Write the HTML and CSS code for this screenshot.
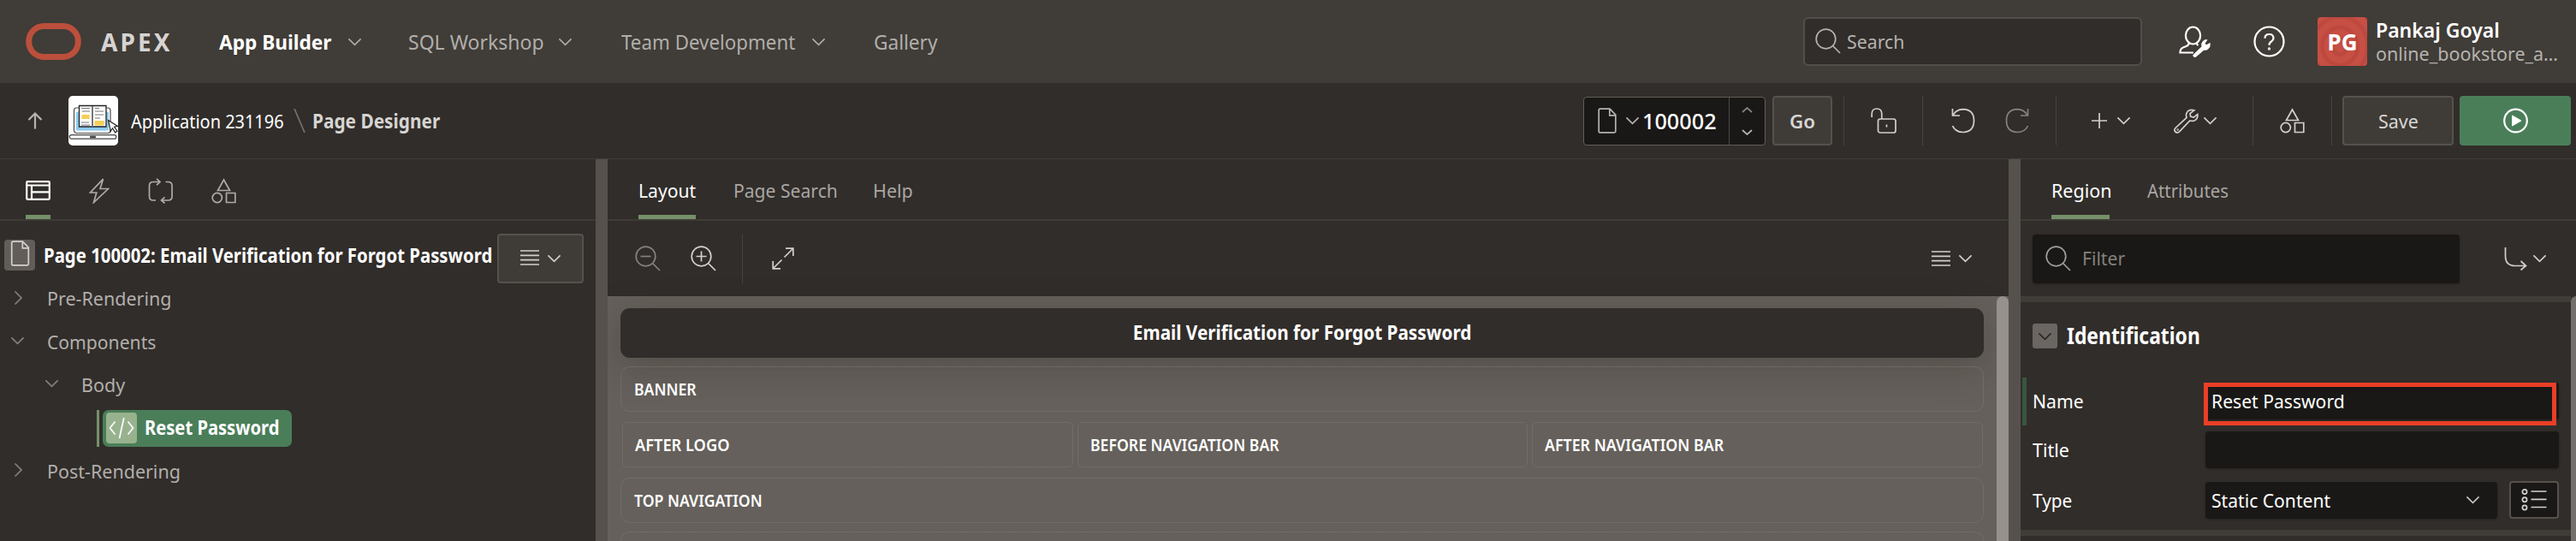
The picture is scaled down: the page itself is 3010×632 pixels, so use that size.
FILE: index.html
```html
<!DOCTYPE html>
<html lang="en">
<head>
<meta charset="utf-8">
<title>Page Designer</title>
<link rel="stylesheet" href="styles.css">
</head>
<body>
<svg width="0" height="0" class="defs">
  <symbol id="down" viewBox="0 0 18 10"><path d="M1.5 1.2 9 8.6l7.500-7.400"/></symbol>
  <symbol id="right" viewBox="0 0 11 18"><path d="M1.500 1.500 9 9l-7.500 7.500"/></symbol>
  <symbol id="lens" viewBox="0 0 30 30"><circle cx="12.500" cy="12.500" r="11.300"/><path d="M20.500 20.500 29 29"/></symbol>
  <symbol id="page" viewBox="0 0 22 30"><path d="M2.500 1.200h11.500l6.800 7v19q0 1.600-1.600 1.600H2.500q-1.300 0-1.300-1.600V2.500q0-1.300 1.300-1.300zM13.800 1.500v7.300h7"/></symbol>
  <symbol id="shapes" viewBox="0 0 29 30"><path d="M14.500 2 21.500 14.500h-14zM17.500 17.500h10.300v11H17.500z"/><circle cx="6.800" cy="23" r="5.600"/></symbol>
  <symbol id="lines" viewBox="0 0 22 20"><path d="M0 2h22M0 7.300h22M0 12.700h22M0 18h22"/></symbol>
</svg>

<header class="header">
  <div class="brand-nav">
    <svg class="logo" width="65" height="43" viewBox="0 0 65 43"><rect x="3.750" y="3.500" width="57.500" height="36" rx="17.500"/></svg>
    <span class="brand">APEX</span>
    <span class="nav active k94">App Builder</span><svg class="ic mute" width="17" height="10"><use href="#down"/></svg>
    <span class="nav k96">SQL Workshop</span><svg class="ic mute" width="17" height="10"><use href="#down"/></svg>
    <span class="nav k93">Team Development</span><svg class="ic mute" width="17" height="10"><use href="#down"/></svg>
    <span class="nav k94">Gallery</span>
  </div>
  <div class="account">
    <div class="search">
      <svg class="ic" width="30" height="30"><use href="#lens"/></svg>
      <span class="k95">Search</span>
    </div>
    <svg class="ic white bold user" width="37" height="37" viewBox="0 0 37 37"><ellipse cx="16.500" cy="11.500" rx="8.600" ry="10"/><path d="M12 20q-.5 3-4 4.200Q1.500 26 1.500 30.500V31.500H17M20.500 20q.3 2 2 3"/><path class="solid" d="M17.500 33.500 27 24.500q-1.300-5.200 3-7.500l2.800-.4-2.600 4.100 1.600 2.200 4.400-2.300q.6 5-2.700 7-2 1-4.300.6l-9.400 8q-1.600.9-2.600-.3t.3-2.400z"/></svg>
    <svg class="ic white bold help" width="37" height="37" viewBox="0 0 37 37"><circle cx="18.500" cy="18.500" r="17"/><path d="M13.500 14.800q0-4.800 5-4.800t5 4.500q0 2.400-2.500 4-2.500 1.500-2.500 4.200"/><circle cx="18.500" cy="27" r=".6"/></svg>
    <div class="avatar"><span>PG</span></div>
    <div class="who"><span class="user-name k96">Pankaj Goyal</span><span class="space k96">online_bookstore_a…</span></div>
  </div>
</header>

<div class="toolbar">
  <svg class="ic bold up" width="18" height="20" viewBox="0 0 18 20"><path d="M9 19.500V2M1.500 9 9 1.500 16.500 9"/></svg>
  <svg class="appicon" width="58" height="58" viewBox="0 0 58 58">
    <rect width="58" height="58" rx="5" fill="#fff"/>
    <rect x="6.500" y="14" width="42.500" height="29.500" rx="3" fill="#fff" stroke="#4a4a4a" stroke-width="1.200"/>
    <rect x="9" y="18.500" width="38" height="22" rx="1.500" fill="#8ccbf0"/>
    <path d="M12.500 11.500H28V36H12.500zM28 11.500h16V36H28z" fill="#fff" stroke="#222" stroke-width="1.300"/>
    <path d="M28 12v24" stroke="#777" stroke-width="2"/>
    <path d="M15.500 22h9v5h-9zM30.500 29h11v5.500h-11z" fill="#f5ce55"/>
    <path d="M15 14.500h10M16 18h9M15 31h9M15 34h10M31 14.500h5M31 18h10M31 22h10M31 26h6" stroke="#777" stroke-width="1"/>
    <rect x="1.300" y="45.600" width="54.500" height="4.500" rx="2.200" fill="#fff" stroke="#444" stroke-width="1.200"/>
    <rect x="25" y="46.700" width="7" height="2.600" rx="1" fill="#444"/>
    <path d="m46.500 28.500 11 7-4 .7 3.500 4.800-2.500 1.800-3-5-2.200 3.500z" fill="#fff" stroke="#222" stroke-width="1.200"/>
  </svg>
  <span class="crumb k89">Application 231196</span>
  <svg class="ic slash" width="14" height="28" viewBox="0 0 14 28"><path d="M1 0l12 28"/></svg>
  <span class="crumb last k93">Page Designer</span>

  <div class="tools">
    <div class="pagesel">
      <svg class="ic lt" width="22" height="30"><use href="#page"/></svg>
      <svg class="ic lt" width="17" height="10"><use href="#down"/></svg>
      <span class="k97">100002</span>
      <div class="spin"><svg class="ic dim" width="13" height="7" viewBox="0 0 13 7"><path d="M1 6l5.500-5L12 6"/></svg><svg class="ic lt" width="13" height="7" viewBox="0 0 13 7"><path d="M1 1l5.500 5L12 1"/></svg></div>
    </div>
    <div class="btn go">Go</div>
    <i class="rule r1"></i>
    <svg class="ic lock" width="30" height="30" viewBox="0 0 30 30"><rect x="8.500" y="13" width="20.500" height="16" rx="2.500"/><path d="M1.200 11V7q0-6 5.800-6t5.800 6v6M18.500 19.500v3"/></svg>
    <i class="rule r2"></i>
    <svg class="ic undo" width="28" height="30" viewBox="0 0 28 30"><path d="M1.500 1v8H10M2 9Q5.500 1.700 14 1.700q12.500.5 12.500 13.300T14 28.500Q5 28.500 1.500 21"/></svg>
    <svg class="ic dim redo" width="28" height="30" viewBox="0 0 28 30"><path d="M26.500 1v8H18M26 9Q22.500 1.700 14 1.700 1.500 2.200 1.500 15T14 28.500q9 0 12.500-7.500"/></svg>
    <i class="rule r3"></i>
    <svg class="ic plus" width="18" height="18" viewBox="0 0 18 18"><path d="M9 0v18M0 9h18"/></svg>
    <svg class="ic c1" width="17" height="10"><use href="#down"/></svg>
    <svg class="ic wrench" width="29" height="29" viewBox="0 0 29 29"><path d="M23.800 1.800Q17.300.2 15 5.200q-1 2 0 5.200L2 22.500q-2.200 2.500 0 4.500t4.500-.2L18.800 14q3.400 1 5.700-.2 4-2.400 3.300-7.300l-4.600 3.600-3.600-1-.6-3.600z"/><circle cx="4.600" cy="24.400" r=".4"/></svg>
    <svg class="ic c2" width="17" height="10"><use href="#down"/></svg>
    <i class="rule r4"></i>
    <svg class="ic shp" width="29" height="30"><use href="#shapes"/></svg>
    <i class="rule r5"></i>
    <div class="btn save"><span class="k96">Save</span></div>
    <div class="btn run"><svg class="ic white bold" width="29" height="30" viewBox="0 0 29 30"><circle cx="14.500" cy="15" r="13.300"/><path class="solid" d="M10.500 9v12l10.500-6z"/></svg></div>
  </div>
</div>

<main class="panes">
  <section class="tree-pane">
    <div class="tabs icons">
      <div class="tab on"><svg class="ic white bold" width="29" height="23" viewBox="0 0 29 23"><rect x="1.200" y="1.200" width="26.600" height="20.600" rx="1"/><path d="M1 5.500h27M7 5.500v16M7 13.300h21"/></svg></div>
      <div class="tab"><svg class="ic mute" width="24" height="30" viewBox="0 0 24 30"><path d="M16.500 1.200 1.500 17h7.300L5.500 28.500 22.500 12.500H13z"/></svg></div>
      <div class="tab"><svg class="ic mute" width="29" height="30" viewBox="0 0 29 30"><path d="M9 26H6q-4.500 0-4.500-4.500V9Q1.500 4.500 6 4.500h7.500M10 .8l4 3.700-4 3.700M20.500 4.500h3q4.500 0 4.500 4.500v12.500q0 4.500-4.500 4.500H16M19.500 22.300l-4 3.700 4 3.500"/></svg></div>
      <div class="tab"><svg class="ic mute" width="29" height="30"><use href="#shapes"/></svg></div>
    </div>
    <div class="tree-title">
      <span class="pageico"><svg class="ic" width="23" height="30"><use href="#page"/></svg></span>
      <span class="t strong k91">Page 100002: Email Verification for Forgot Password</span>
      <div class="btn menu"><svg class="ic" width="22" height="20"><use href="#lines"/></svg><svg class="ic" width="17" height="10"><use href="#down"/></svg></div>
    </div>
    <div class="node"><svg class="ic dim shut" width="11" height="18"><use href="#right"/></svg><span class="k96">Pre-Rendering</span></div>
    <div class="node"><svg class="ic dim" width="17" height="10"><use href="#down"/></svg><span class="k94">Components</span></div>
    <div class="node sub"><svg class="ic dim" width="17" height="10"><use href="#down"/></svg><span class="k96">Body</span></div>
    <div class="node leaf"><div class="pill"><span class="code"><svg class="ic white" width="30" height="26" viewBox="0 0 30 26"><path d="M7.500 5.500 1.500 13l6 7.500M22.500 5.500l6 7.500-6 7.500M17.800 1 12.500 25"/></svg></span><span class="k90">Reset Password</span></div></div>
    <div class="node"><svg class="ic dim shut" width="11" height="18"><use href="#right"/></svg><span class="k96">Post-Rendering</span></div>
  </section>

  <div class="splitter"></div>

  <section class="layout-pane">
    <div class="tabs">
      <div class="tab on w67"><span class="k94">Layout</span></div>
      <div class="tab w119"><span class="k94">Page Search</span></div>
      <div class="tab"><span class="k96">Help</span></div>
    </div>
    <div class="zoombar">
      <svg class="ic dim" width="30" height="30" viewBox="0 0 30 30"><use href="#lens"/><path d="M6.500 12.500h12"/></svg>
      <svg class="ic zin" width="30" height="30" viewBox="0 0 30 30"><use href="#lens"/><path d="M6.500 12.500h12M12.500 6.500v12"/></svg>
      <i class="rule"></i>
      <svg class="ic expand" width="26" height="26" viewBox="0 0 26 26"><path d="M14.500 11.500 24.500 1.500M16 1.200h8.800V10M11.500 14.500l-10 10M1.200 16v8.800H10"/></svg>
      <svg class="ic lns" width="22" height="20"><use href="#lines"/></svg>
      <svg class="ic" width="17" height="10"><use href="#down"/></svg>
    </div>
    <div class="canvas">
      <div class="slots">
        <div class="pagetitle"><span>Email Verification for Forgot Password</span></div>
        <div class="slot"><span class="k90">BANNER</span></div>
        <div class="trio">
          <div class="slot"><span class="k93">AFTER LOGO</span></div>
          <div class="slot"><span class="k90">BEFORE NAVIGATION BAR</span></div>
          <div class="slot"><span class="k91">AFTER NAVIGATION BAR</span></div>
        </div>
        <div class="slot"><span class="k90">TOP NAVIGATION</span></div>
        <div class="slot"></div>
      </div>
      <div class="thumb"></div>
    </div>
  </section>

  <div class="splitter"></div>

  <section class="props">
    <div class="tabs">
      <div class="tab on w68"><span class="k96">Region</span></div>
      <div class="tab"><span class="k91">Attributes</span></div>
    </div>
    <div class="filterbar">
      <div class="filter"><svg class="ic" width="30" height="30"><use href="#lens"/></svg><span class="k94">Filter</span></div>
      <svg class="ic goto" width="27" height="28" viewBox="0 0 27 28"><path d="M1.500 1v10q0 11.500 11.500 11.500h12M19.500 17l6 5.500-6 5"/></svg>
      <svg class="ic" width="17" height="10"><use href="#down"/></svg>
    </div>
    <div class="sheet">
      <div class="fields">
        <div class="group"><span class="toggle"><svg class="ic dark" width="17" height="10"><use href="#down"/></svg></span><span class="k88">Identification</span></div>
        <div class="field f-name"><i class="mark"></i><label class="k94">Name</label><div class="input"><span class="k94">Reset Password</span><div class="callout"></div></div></div>
        <div class="field f-title"><label class="k96">Title</label><div class="input"></div></div>
        <div class="field f-type"><label class="k93">Type</label><div class="input select"><span class="k94">Static Content</span><svg class="ic" width="17" height="10"><use href="#down"/></svg></div>
          <div class="picker"><svg class="ic" width="30" height="28" viewBox="0 0 30 28"><circle cx="4" cy="4.500" r="2.600"/><circle cx="4" cy="13.800" r="2.600"/><circle cx="4" cy="23" r="2.600"/><path d="M11.500 4h18M11.500 13.300h18M11.500 22.500h18"/></svg></div></div>
      </div>
      <div class="thumb"></div>
    </div>
  </section>
</main>
</body>
</html>
```
FILE: styles.css
```css
* { box-sizing: border-box; }
body {
  margin: 0;
  width: 3010px;
  height: 632px;
  overflow: hidden;
  background: #312d2a;
  color: #fff;
  font: 22.4px/30px "Noto Sans", "Open Sans", sans-serif;
  white-space: nowrap;
}
.defs { position: absolute; }

/* Condensed text widths */
.k88, .k89, .k90, .k91, .k93, .k94, .k95, .k96, .k97 { display: inline-block; transform-origin: 0 50%; }
.k88 { transform: scaleX(.88); }
.k89 { transform: scaleX(.89); }
.k90 { transform: scaleX(.9); }
.k91 { transform: scaleX(.909); }
.k93 { transform: scaleX(.93); }
.k94 { transform: scaleX(.943); }
.k95 { transform: scaleX(.952); }
.k96 { transform: scaleX(.959); }
.k97 { transform: scaleX(.97); }

/* Icons */
.ic { display: block; flex: none; fill: none; stroke: #d2d0ce; stroke-width: 1.7; }
.ic.mute { stroke: #aeaca9; }
.ic.lt { stroke: #b5b3b0; }
.ic.dim { stroke: #85817d; }
.ic.dark { stroke: #2b2825; }
.ic.white { stroke: #fff; }
.ic.bold { stroke-width: 2.2; }
.solid { fill: #fff; stroke-width: 1; }
.rule { flex: none; width: 1px; height: 58px; background: #474340; }
.btn {
  display: flex;
  align-items: center;
  justify-content: center;
  height: 58px;
  background: #3f3b36;
  border: 2px solid #56514c;
  border-radius: 4px;
  color: #d8d6d4;
}

/* Header */
.header { display: flex; height: 97px; background: #403c37; align-items: center; justify-content: space-between; }
.brand-nav {
  display: grid;
  grid-template-columns: 88px 138px 150px 71px 175px 74px 222px 73px 100px;
  align-items: center;
  padding-left: 30px;
}
.logo { fill: none; stroke: #bb4f3c; stroke-width: 7; }
.brand { font-size: 28px; font-weight: 700; letter-spacing: 3.1px; color: #d6d4d2; }
.nav { font-size: 24px; color: #b0aeab; }
.nav.active { color: #fff; font-weight: 700; }
.account { display: flex; align-items: center; width: 903px; }
.search {
  display: flex;
  align-items: center;
  width: 396px;
  height: 57px;
  padding-left: 12px;
  background: #312d2a;
  border: 2px solid #524e49;
  border-radius: 6px;
  color: #b5b3b0;
}
.search .ic { margin: -2px 7px 0 0; stroke: #b5b3b0; }
.user { margin-left: 43px; }
.help { margin-left: 50px; }
.avatar {
  display: flex;
  align-items: center;
  justify-content: center;
  width: 58px;
  height: 57px;
  margin: 0 10px 0 38px;
  border-radius: 4px;
  background: repeating-radial-gradient(ellipse at 45% 60%, #c74f44 0 5px, #bb473d 8px 9px, #c74f44 12px);
  font-size: 26px;
  font-weight: 700;
}
.who { display: flex; flex-direction: column; line-height: 28px; }
.user-name { font-size: 24px; font-weight: 600; }
.space { color: #b5b3b0; }

/* Toolbar */
.toolbar { display: flex; height: 89px; align-items: center; border-bottom: 1px solid #413d38; }
.up { margin-left: 32px; stroke: #b5b3b0; }
.appicon { flex: none; margin-left: 30px; }
.crumb { width: 190px; margin-left: 15px; padding-top: 2px; }
.slash { stroke: #75716d; }
.crumb.last { margin-left: 8px; font-weight: 700; color: #d6d4d2; }
.tools { display: flex; align-items: center; margin-left: auto; width: 1160px; }
.pagesel {
  display: flex;
  align-items: center;
  width: 213px;
  height: 57px;
  padding-left: 16px;
  background: #1a1816;
  border: 1px solid #625d58;
  border-radius: 4px;
  font-size: 26px;
  font-weight: 500;
}
.pagesel .ic + .ic { margin: 0 3px 0 10px; }
.spin {
  display: flex;
  flex-direction: column;
  align-items: center;
  justify-content: center;
  gap: 19px;
  width: 42px;
  height: 100%;
  margin-left: auto;
  border-left: 1px solid #4d4945;
}
.pagesel .spin .ic { margin: 0; }
.go { width: 70px; margin-left: 8px; padding-top: 2px; font-weight: 600; }
.r1 { margin-left: 13px; }
.lock { margin-left: 31px; }
.r2 { margin-left: 30px; }
.undo { margin-left: 33px; }
.redo { margin-left: 35px; }
.r3 { margin-left: 31px; }
.plus { margin-left: 41px; }
.c1 { margin-left: 11px; }
.wrench { margin-left: 50px; }
.c2 { margin-left: 5px; }
.r4 { margin-left: 41px; }
.shp { margin-left: 31px; }
.r5 { margin-left: 31px; }
.save { width: 130px; margin-left: 12px; padding: 2px 0 0 2px; }
.run { width: 130px; margin-left: 7px; background: #4a7e59; border-color: #4a7e59; }

/* Panes */
.panes { display: grid; grid-template-columns: 696px 14px 1637px 14px 649px; height: 446px; }
.panes > * { min-width: 0; overflow: hidden; }
.splitter { background: #56514c; }
.tabs { display: flex; height: 72px; border-bottom: 2px solid #3f3b37; padding-left: 36px; gap: 44px; color: #a9a6a3; }
.tab { display: flex; align-items: center; height: 70px; padding-top: 4px; }
.tab.on { color: #fff; border-bottom: 5px solid #76906a; padding-top: 9px; }
.w67 { width: 67px; }
.w68 { width: 68px; }
.w119 { width: 119px; }

/* Page tree */
.tabs.icons { padding-left: 30px; gap: 45px; }
.tabs.icons .tab { padding-top: 3px; }
.tabs.icons .tab.on { padding-top: 7px; }
.tree-title { display: flex; align-items: center; height: 58px; margin-top: 15px; padding-left: 5px; }
.pageico { display: flex; justify-content: center; width: 36px; height: 36px; margin: -8px 10px 0 0; padding-top: 1px; background: #625d59; border-radius: 4px; }
.tree-title .t { width: 530px; margin-top: -6px; }
.strong { font-weight: 700; }
.menu { width: 101px; gap: 9px; }
.menu .ic { margin-bottom: 2px; }
.menu .ic + .ic { margin: 0; }
.node { display: flex; align-items: center; height: 50.400px; padding-left: 12px; color: #b2afac; }
.tree-title + .node { margin-top: -7px; }
.node > .ic { margin: -3px 26px 0 0; }
.node > .ic.shut { margin: -3px 28px 0 4px; }
.node.sub { padding-left: 52px; }
.node.leaf { padding-left: 113px; }
.node.leaf::before { content: ""; width: 3px; height: 43px; margin-right: 4px; background: #76906a; }
.pill { display: flex; align-items: center; width: 221px; height: 43px; padding-left: 4px; border-radius: 7px; background: #4a7e59; color: #fff; font-weight: 700; }
.code { flex: none; display: flex; align-items: center; justify-content: center; width: 36px; height: 36px; margin-right: 9px; border-radius: 4px; background: #98b28e; }

/* Layout */
.zoombar { display: flex; align-items: center; height: 88px; padding-left: 32px; }
.zin { margin-left: 35px; }
.zoombar .rule { margin-left: 30px; }
.expand { margin-left: 34px; }
.lns { margin: 0 9px 0 auto; }
.zoombar .ic:last-child { margin-right: 42px; }
.canvas { display: flex; justify-content: space-between; height: 286px; background: #65605b; }
.slots { width: 1608px; padding: 14px 0 0 15px; }
.pagetitle {
  display: flex;
  align-items: center;
  justify-content: center;
  height: 58px;
  border-radius: 11px;
  background: #312d2a;
  box-shadow: 0 10px 44px rgba(30, 24, 20, .25);
  font-weight: 700;
}
.pagetitle span { transform: scaleX(.926); }
.slot { position: relative; display: flex; align-items: center; height: 53px; margin-top: 10px; padding-left: 15px; border: 1px dotted #7d7873; border-radius: 11px; font-size: 19.600px; font-weight: 600; }
.trio { display: grid; grid-template-columns: 527px 526px 527px; gap: 5px; margin: 12px 0; padding-left: 2px; }
.trio .slot { margin: 0; padding-left: 14px; border-radius: 6px; }
.thumb { width: 14px; border-radius: 7px 7px 0 0; background: #96918d; }

/* Properties */
.filterbar { display: flex; align-items: center; height: 88px; padding-left: 14px; }
.filter { display: flex; align-items: center; gap: 13px; width: 499px; height: 57px; padding-left: 15px; border-radius: 4px; background: #1a1816; color: #85817d; box-shadow: 0 1px 3px rgba(0, 0, 0, .3); }
.filter .ic { stroke: #a19e9a; }
.goto { margin: 0 6px 0 52px; }
.sheet { display: flex; height: 286px; }
.fields { width: 643px; border-top: 7px solid #403c37; }
.sheet .thumb { width: 6px; border-radius: 6px 0 0; background: #73706c; }
.group { display: flex; align-items: center; height: 29px; margin: 25px 0 34px 14px; font-size: 26px; font-weight: 700; }
.group > span + span { margin-top: -1px; }
.toggle { display: flex; align-items: center; justify-content: center; width: 29px; height: 29px; margin-right: 11px; border-radius: 3px; background: #6b6662; }
.field { display: flex; align-items: center; padding-left: 14px; }
.field label { width: 202px; flex: none; }
.f-name { height: 56px; padding-left: 2px; }
.mark { width: 5px; height: 56px; margin-right: 7px; background: #395540; }
.f-name .input { margin-top: -2px; }
.f-name .input > span { margin-top: 2px; }
.input { position: relative; display: flex; align-items: center; width: 413px; height: 43px; padding-left: 7px; border-radius: 4px; background: #1a1816; box-shadow: 0 1px 3px rgba(0, 0, 0, .3); }
.callout { position: absolute; left: -2px; top: 0; width: 412px; height: 50px; border: 5px solid #ea3f26; }
.f-title { margin-top: 7px; }
.f-type { height: 58px; margin-top: 8px; }
.f-type label, .select > span { padding-top: 1px; }
.select { width: 341px; }
.select .ic { margin-left: auto; margin-right: 20px; stroke: #c5c3c0; }
.picker { display: flex; align-items: center; justify-content: center; width: 58px; height: 44px; margin-left: 14px; border: 2px solid #56514c; border-radius: 4px; background: #1a1816; }
.fields::after { content: ""; display: block; height: 7px; margin-top: 6px; background: #403c37; }
```
